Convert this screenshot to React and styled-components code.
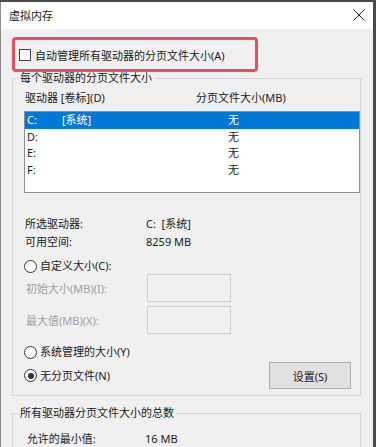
import React from 'react';
import styled, {createGlobalStyle} from 'styled-components';

const GlobalStyle = createGlobalStyle`
  html, body {
    margin: 0;
    padding: 0;
    background: #4a4a4a;
  }
  body {
    font-family: "Noto Sans", "Noto Sans CJK SC", sans-serif;
    font-size: 11px;
    color: #1a1a1a;
  }
`;

const Window = styled.div`
  width: 372px;
  height: 445px;
  margin-top: 2px;
  border-left: 1px solid #8c8c8c;
  background: #f0f0f0;
  overflow: hidden;
`;

const TitleBar = styled.div`
  height: 27px;
  background: #fff;
  display: flex;
  align-items: center;
  justify-content: space-between;
  padding: 0 6px 0 8px;
  font-size: 11px;
  line-height: 27px;
`;

const CloseButton = styled.div`
  width: 16px;
  height: 16px;
  display: flex;
  align-items: center;
  justify-content: center;
  margin-bottom: 1px;
`;

const Body = styled.div`
  padding: 8px 0 0 11px;
`;

const Highlight = styled.div`
  width: 236px;
  height: 29px;
  border: 3px solid #e84e5f;
  border-radius: 4px;
  display: flex;
  align-items: center;
  padding-left: 4px;
  gap: 4px;
`;

const Checkbox = styled.span`
  width: 10px;
  height: 10px;
  border: 1px solid #38435a;
  background: #fff;
  flex: none;
`;

const Group = styled.fieldset`
  margin: ${(props) => props.top || 0}px 0 0 0;
  padding: 0;
  width: 349px;
  min-width: 0;
  border: 1px solid #d6d6d6;
  height: ${(props) => props.height}px;
  box-sizing: border-box;
`;

const Legend = styled.legend`
  margin-left: 5px;
  padding: 0 2px;
  line-height: 12px;
  font-size: 11px;
`;

const GroupContent = styled.div`
  padding: ${(props) => props.pt}px 0 0 11px;
`;

const HeaderRow = styled.div`
  display: grid;
  grid-template-columns: 171px 1fr;
  padding-left: 1px;
  line-height: 16px;
  height: 16px;
`;

const ListBox = styled.div`
  margin-top: 5px;
  height: 80px;
  border: 1px solid #8a8e96;
  background: #fff;
`;

const ListRow = styled.div`
  display: grid;
  grid-template-columns: 35px 166px 1fr;
  padding-left: 2px;
  height: 16.6px;
  line-height: 16.6px;
  background: ${(props) => (props.selected ? '#0078d7' : 'transparent')};
  color: ${(props) => (props.selected ? '#fff' : '#1a1a1a')};
`;

const InfoList = styled.div`
  margin-top: 22px;
  padding-left: 1px;
`;

const InfoRow = styled.div`
  display: grid;
  grid-template-columns: 121px 1fr;
  line-height: 18px;
  height: 18px;
`;

const RadioRow = styled.label`
  display: flex;
  align-items: center;
  gap: 3px;
  line-height: 16px;
  height: 16px;
  margin-top: ${(props) => props.top || 0}px;
`;

const Radio = styled.span`
  width: 11px;
  height: 11px;
  border: 1px solid #333;
  border-radius: 50%;
  background: #fff;
  display: flex;
  align-items: center;
  justify-content: center;
  flex: none;
  &::after {
    content: '';
    display: ${(props) => (props.checked ? 'block' : 'none')};
    width: 6px;
    height: 6px;
    border-radius: 50%;
    background: #333;
  }
`;

const FieldRow = styled.div`
  display: grid;
  grid-template-columns: 121px 84px;
  align-items: center;
  padding-left: 2px;
  margin-top: ${(props) => props.top || 0}px;
  color: #a0a0a0;
`;

const TextBox = styled.div`
  height: 26px;
  border: 1px solid #cfcfcf;
  background: #f0f0f0;
`;

const BottomRow = styled.div`
  display: flex;
  align-items: center;
  justify-content: space-between;
  margin-top: 2px;
  padding-right: 9px;
`;

const Button = styled.button`
  width: 82px;
  height: 27px;
  background: #e1e1e1;
  border: 1px solid #adadad;
  font-family: inherit;
  font-size: 11px;
  color: #1a1a1a;
  padding: 0;
`;

const drives = [
  {id: 'C:', label: '[系统]', size: '无', selected: true},
  {id: 'D:', label: '', size: '无'},
  {id: 'E:', label: '', size: '无'},
  {id: 'F:', label: '', size: '无'},
];

export default function App() {
  return (
    <>
      <GlobalStyle />
      <Window>
        <TitleBar>
          <span>虚拟内存</span>
          <CloseButton>
            <svg width="12" height="12" viewBox="0 0 12 12">
              <path d="M0.5 0.5 L11.5 11.5 M11.5 0.5 L0.5 11.5" stroke="#222" strokeWidth="1" fill="none" />
            </svg>
          </CloseButton>
        </TitleBar>
        <Body>
          <Highlight>
            <Checkbox />
            <span>自动管理所有驱动器的分页文件大小(A)</span>
          </Highlight>

          <Group height={324}>
            <Legend>每个驱动器的分页文件大小</Legend>
            <GroupContent pt={6}>
              <HeaderRow>
                <span>驱动器 [卷标](D)</span>
                <span>分页文件大小(MB)</span>
              </HeaderRow>
              <ListBox>
                {drives.map((d) => (
                  <ListRow key={d.id} selected={d.selected}>
                    <span>{d.id}</span>
                    <span>{d.label}</span>
                    <span>{d.size}</span>
                  </ListRow>
                ))}
              </ListBox>

              <InfoList>
                <InfoRow>
                  <span>所选驱动器:</span>
                  <span>C:&nbsp;&nbsp;[系统]</span>
                </InfoRow>
                <InfoRow>
                  <span>可用空间:</span>
                  <span>8259 MB</span>
                </InfoRow>
              </InfoList>

              <RadioRow top={7}>
                <Radio />
                <span>自定义大小(C):</span>
              </RadioRow>
              <FieldRow>
                <span>初始大小(MB)(I):</span>
                <TextBox />
              </FieldRow>
              <FieldRow top={4}>
                <span>最大值(MB)(X):</span>
                <TextBox />
              </FieldRow>

              <RadioRow top={10}>
                <Radio />
                <span>系统管理的大小(Y)</span>
              </RadioRow>
              <BottomRow>
                <RadioRow>
                  <Radio checked />
                  <span>无分页文件(N)</span>
                </RadioRow>
                <Button>设置(S)</Button>
              </BottomRow>
            </GroupContent>
          </Group>

          <Group top={11} height={60}>
            <Legend>所有驱动器分页文件大小的总数</Legend>
            <GroupContent pt={11}>
              <InfoRow>
                <span>&nbsp;允许的最小值:</span>
                <span>16 MB</span>
              </InfoRow>
            </GroupContent>
          </Group>
        </Body>
      </Window>
    </>
  );
}
